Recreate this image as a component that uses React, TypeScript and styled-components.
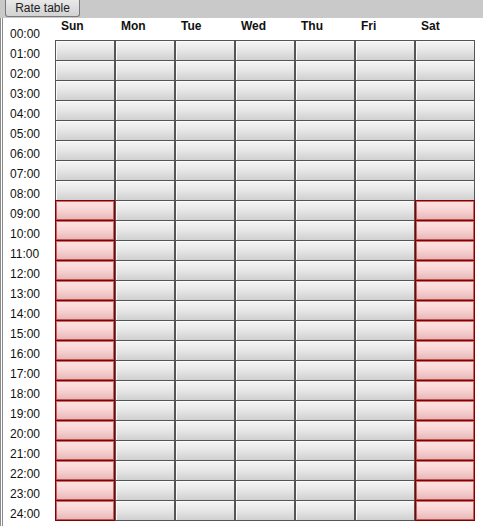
import React from 'react'
import styled, { createGlobalStyle } from 'styled-components'

const DAYS = ['Sun', 'Mon', 'Tue', 'Wed', 'Thu', 'Fri', 'Sat']
const HOURS = Array.from({ length: 25 }, (_, i) => `${String(i).padStart(2, '0')}:00`)

// weekend cells from 09:00 onward carry the peak rate
const isPeak = (day: number, hour: number) => (day === 0 || day === 6) && hour >= 9

const GlobalStyle = createGlobalStyle`
  html, body {
    margin: 0;
    padding: 0;
    background: #ffffff;
    font-family: "Liberation Sans", Arial, sans-serif;
    color: #111111;
  }
`

const Page = styled.div`
  width: 483px;
  height: 526px;
  overflow: hidden;
`

const TopBar = styled.div`
  height: 18px;
  background: #c9c9c9;
  display: flex;
  align-items: flex-start;
`

const Tab = styled.button`
  margin-left: 5px;
  width: 75px;
  height: 17px;
  padding: 0;
  border: 1px solid #7a7a7a;
  border-top: none;
  border-radius: 0 0 3px 3px;
  background: linear-gradient(#e9e9e9, #d2d2d2);
  font-family: inherit;
  font-size: 12px;
  line-height: 15px;
  color: #222222;
`

const Body = styled.div`
  display: flex;
  border-left: 3px double #8c8c8c;
  height: 508px;
`

const TimeColumn = styled.div`
  width: 52px;
  padding-top: 6px;
  display: flex;
  flex-direction: column;
`

const TimeLabel = styled.div`
  height: 20px;
  line-height: 20px;
  padding-left: 7px;
  font-size: 12px;
`

const Schedule = styled.div`
  display: flex;
  flex-direction: column;
`

const DayHeader = styled.div`
  display: grid;
  grid-template-columns: repeat(7, 60px);
  height: 22px;
`

const DayName = styled.div`
  padding-left: 6px;
  font-size: 12px;
  font-weight: bold;
  line-height: 17px;
`

const Row = styled.div`
  display: grid;
  grid-template-columns: repeat(7, 60px);
  height: 21px;
  & + & {
    margin-top: -1px;
  }
`

const Cell = styled.div<{ $peak: boolean }>`
  box-sizing: border-box;
  height: 21px;
  border: 1px solid ${p => (p.$peak ? '#860000' : '#555555')};
  box-shadow: ${p =>
    p.$peak ? 'inset 0 0 0 1px rgba(150, 10, 10, 0.55)' : 'inset 1px 1px 0 #fafafa'};
  background: ${p =>
    p.$peak
      ? 'linear-gradient(#ffe4e4, #f9d5d5 45%, #e6b6b6)'
      : 'linear-gradient(#f6f6f6, #e8e8e8 45%, #d0d0d0)'};
  position: relative;
  z-index: ${p => (p.$peak ? 1 : 0)};
`

export default function App() {
  return (
    <Page>
      <GlobalStyle />
      <TopBar>
        <Tab>Rate table</Tab>
      </TopBar>
      <Body>
        <TimeColumn>
          {HOURS.map(h => (
            <TimeLabel key={h}>{h}</TimeLabel>
          ))}
        </TimeColumn>
        <Schedule>
          <DayHeader>
            {DAYS.map(d => (
              <DayName key={d}>{d}</DayName>
            ))}
          </DayHeader>
          {HOURS.slice(1).map((h, i) => (
            <Row key={h}>
              {DAYS.map((d, day) => (
                <Cell key={d} $peak={isPeak(day, i + 1)} />
              ))}
            </Row>
          ))}
        </Schedule>
      </Body>
    </Page>
  )
}
